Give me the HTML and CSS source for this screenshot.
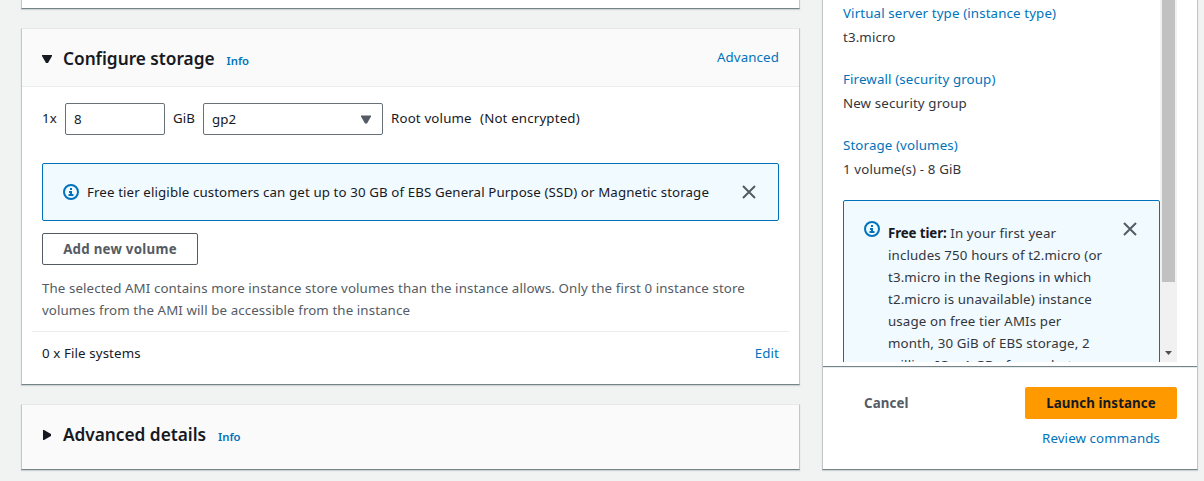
FILE: index.html
```html
<!DOCTYPE html>
<html lang="en">
<head>
<meta charset="utf-8">
<title>Launch an instance</title>
<link rel="stylesheet" href="styles.css">
</head>
<body>
<div class="page">
  <main class="main">
    <section class="card card-prev"></section>

    <section class="card card-storage">
      <header class="card-head">
        <svg class="caret" viewBox="0 0 10 10"><path d="M0 1h10v1L6 9H4L0 2z"/></svg>
        <h2 class="title">Configure storage</h2>
        <a class="info">Info</a>
        <a class="link head-link">Advanced</a>
      </header>
      <div class="card-body">
        <div class="volume">
          <span class="count">1x</span>
          <span class="field size">8</span>
          <span class="unit">GiB</span>
          <span class="field select">gp2<svg class="down" viewBox="0 0 11 9"><path d="M0 .5h10v1L6 8.500H4L0 1.500z"/></svg></span>
          <span class="root">Root volume</span>
          <span class="enc">(Not encrypted)</span>
        </div>
        <div class="alert">
          <svg class="icon" viewBox="0 0 16 16"><circle cx="8" cy="8" r="7"/><path d="M8 4v2M6 8h2v3M5.500 11h5"/></svg>
          <p class="alert-text">Free tier eligible customers can get up to 30 GB of EBS General Purpose (SSD) or Magnetic storage</p>
          <svg class="close" viewBox="0 0 14 14"><path d="M1 1l12 12M13 1L1 13"/></svg>
        </div>
        <button class="btn add">Add new volume</button>
        <p class="note">The selected AMI contains more instance store volumes than the instance allows. Only the first 0 instance store<br>volumes from the AMI will be accessible from the instance</p>
        <div class="files"><span class="fs">0 x File systems</span><a class="link edit">Edit</a></div>
      </div>
    </section>

    <section class="card card-details">
      <svg class="caret" viewBox="0 0 10 10"><path d="M1 0h1l7 4v2l-7 4H1z"/></svg>
      <h2 class="title">Advanced details</h2>
      <a class="info">Info</a>
    </section>
  </main>

  <aside class="side">
    <div class="scroll">
      <div class="summary">
        <a class="link">Virtual server type (instance type)</a>
        <p class="value">t3.micro</p>
        <a class="link">Firewall (security group)</a>
        <p class="value">New security group</p>
        <a class="link">Storage (volumes)</a>
        <p class="value">1 volume(s) - 8 GiB</p>
        <div class="alert tier">
          <svg class="icon" viewBox="0 0 16 16"><circle cx="8" cy="8" r="7"/><path d="M8 4v2M6 8h2v3M5.500 11h5"/></svg>
          <p class="tier-text"><b>Free tier:</b> In your first year<br>includes 750 hours of t2.micro (or<br>t3.micro in the Regions in which<br>t2.micro is unavailable) instance<br>usage on free tier AMIs per<br>month, 30 GiB of EBS storage, 2<br>million IOs, 1 GB of snapshots,</p>
          <svg class="close" viewBox="0 0 14 14"><path d="M1 1l12 12M13 1L1 13"/></svg>
        </div>
      </div>
      <div class="bar"><div class="thumb"></div><svg class="bar-arrow" viewBox="0 0 7 4"><path d="M0 0h7L3.500 4z"/></svg></div>
    </div>
    <footer class="actions">
      <div class="row"><span class="cancel">Cancel</span><button class="btn launch">Launch instance</button></div>
      <a class="link review">Review commands</a>
    </footer>
  </aside>
</div>
</body>
</html>
```
FILE: styles.css
```css
* { box-sizing: border-box; }
body {
  margin: 0;
  height: 481px;
  overflow: hidden;
  background: #f1f3f3;
  color: #16191f;
  font: 13.3px/22px "Noto Sans", sans-serif;
  letter-spacing: .11px;
}
p, h2 { margin: 0; }
.page { display: flex; gap: 22px; padding-left: 21px; }
.main { width: 779px; display: flex; flex-direction: column; gap: 19px; }
.card, .side {
  background: #fff;
  border: 1px solid #c2c8c8;
  border-top-color: #e6eaea;
  border-bottom-color: #748489;
  box-shadow: 0 1px 1px rgba(0, 28, 36, .15);
}
.card-prev { height: 9px; border-top: 0; }
.card-storage { height: 357px; }
.card-head {
  display: flex;
  align-items: center;
  height: 58px;
  padding: 2px 20px 0;
  background: #fafafa;
  border-bottom: 1px solid #eaeded;
}
.caret { width: 10px; height: 10px; margin-right: 11px; fill: #16191f; }
.title { font-size: 17.300px; line-height: 24px; font-weight: 600; letter-spacing: -.03px; white-space: nowrap; }
.info { margin: 4px 0 0 12px; color: #0073bb; font-size: 11.300px; font-weight: 600; line-height: 20px; letter-spacing: 0; }
.link { color: #0073bb; white-space: nowrap; }
.head-link { margin: -4px 0 0 auto; }
.card-body { padding: 16px 20px 0; }
.volume { display: flex; align-items: center; height: 32px; white-space: nowrap; }
.count, .unit, .root, .enc { margin-top: -2px; }
.count { width: 23px; }
.field {
  display: flex;
  align-items: center;
  height: 32px;
  padding: 0 8px;
  border: 1px solid #687078;
  border-radius: 2px;
  background: #fff;
}
.size { width: 100px; }
.unit { width: 38px; padding-left: 8px; }
.select { width: 180px; justify-content: space-between; padding-right: 10px; }
.down { width: 11px; height: 9px; fill: #545b64; }
.root { width: 97px; padding-left: 8px; }
.root, .enc { letter-spacing: .16px; }
.alert {
  display: flex;
  align-items: center;
  height: 58px;
  margin-top: 28px;
  padding: 0 22px 0 20px;
  background: #f1faff;
  border: 1px solid #0073bb;
  border-radius: 2px;
}
.icon { flex: none; width: 16px; height: 16px; margin-right: 8px; fill: none; stroke: #0073bb; stroke-width: 2; }
.close { flex: none; width: 14px; height: 14px; margin-left: auto; fill: none; stroke: #545b64; stroke-width: 2; }
.alert-text { white-space: nowrap; }
.btn {
  display: flex;
  align-items: center;
  justify-content: center;
  height: 32px;
  padding: 0;
  font: 700 13.3px/22px "Noto Sans", sans-serif;
  letter-spacing: .1px;
  border: 1px solid #545b64;
  border-radius: 2px;
  white-space: nowrap;
}
.add { width: 156px; margin-top: 12px; color: #545b64; background: #fff; letter-spacing: .26px; }
.note { margin-top: 12px; color: #545b64; letter-spacing: .1px; white-space: nowrap; }
.files {
  display: flex;
  justify-content: space-between;
  margin: 10px -10px 0;
  padding: 10px 10px 0;
  border-top: 1px solid #eaeded;
}
.card-details { display: flex; align-items: center; height: 66px; padding: 0 20px 4px; background: #fafafa; }
.side { width: 376px; height: 470px; border-top: 0; }
.scroll { display: flex; height: 362px; overflow: hidden; }
.summary { width: 337px; padding: 2px 0 0 20px; letter-spacing: .13px; }
.summary .link { display: block; }
.value { margin: 2px 0 20px; color: #32363d; }
.tier { align-items: flex-start; height: 220px; margin-top: 0; padding: 20px 22px 0 20px; }
.tier-text { padding-top: 1px; color: #32363d; white-space: nowrap; }
.tier b { color: #16191f; letter-spacing: -.1px; }
.tier .close { margin-top: 1px; }
.bar { display: flex; flex-direction: column; align-items: center; width: 17px; background: #f1f1f1; }
.thumb { width: 13px; height: 282px; background: #c1c1c1; }
.bar-arrow { width: 7px; height: 4px; margin-top: 69px; fill: #505050; }
.actions {
  height: 103px;
  margin-top: 4px;
  padding: 20px 20px 0;
  border-top: 1px solid #748489;
  box-shadow: inset 0 1px 0 #e6eaea;
}
.row { display: flex; align-items: center; justify-content: space-between; }
.cancel { padding-left: 21px; color: #545b64; font-weight: 700; }
.launch { width: 152px; color: #16191f; background: #f90; border-color: #f90; }
.review { display: block; margin: 8px 17px 0 0; text-align: right; }
```
